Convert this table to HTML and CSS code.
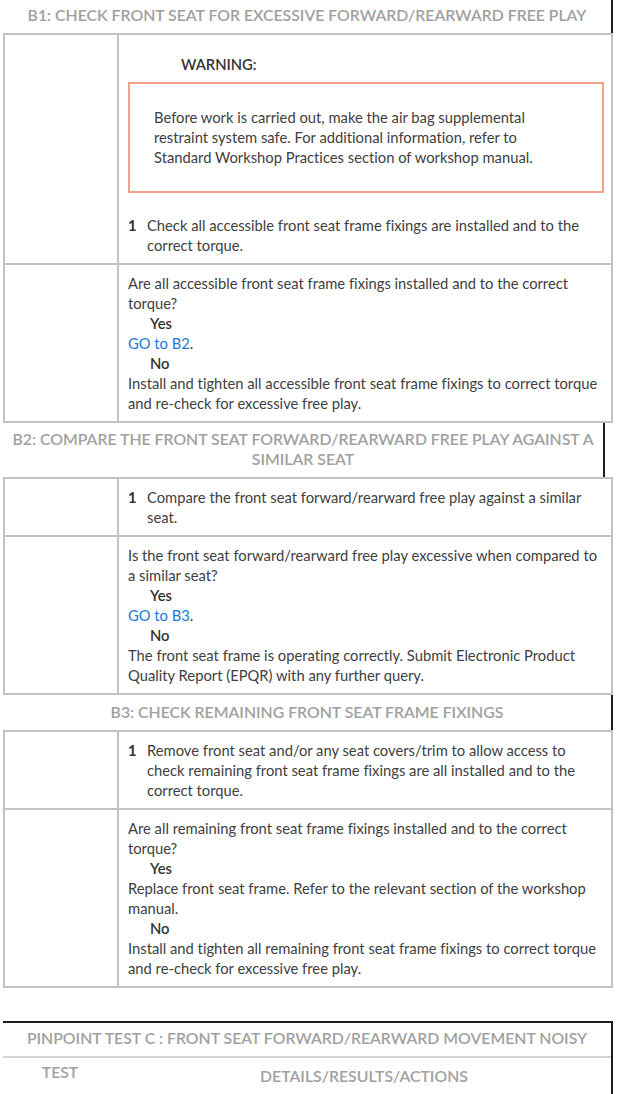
FILE: index.html
```html
<!DOCTYPE html>
<html>
<head>
<meta charset="utf-8">
<link rel="stylesheet" href="styles.css">
</head>
<body>
<div class="page">
  <div class="sec-head">B1: CHECK FRONT SEAT FOR EXCESSIVE FORWARD/REARWARD FREE PLAY</div>
  <div class="tbl">
    <div class="row">
      <div class="c1"></div>
      <div class="c2">
        <div class="warn-title">WARNING:</div>
        <div class="warn-box">Before work is carried out, make the air bag supplemental restraint system safe. For additional information, refer to Standard Workshop Practices section of workshop manual.</div>
        <div class="step"><span class="num">1</span><span class="step-text">Check all accessible front seat frame fixings are installed and to the correct torque.</span></div>
      </div>
    </div>
    <div class="row">
      <div class="c1"></div>
      <div class="c2">
        <div>Are all accessible front seat frame fixings installed and to the correct torque?</div>
        <div class="ans">Yes</div>
        <div><a class="link">GO to B2</a>.</div>
        <div class="ans">No</div>
        <div>Install and tighten all accessible front seat frame fixings to correct torque and re-check for excessive free play.</div>
      </div>
    </div>
  </div>

  <div class="sec-head sec-head-b2">B2: COMPARE THE FRONT SEAT FORWARD/REARWARD FREE PLAY AGAINST A SIMILAR SEAT</div>
  <div class="tbl">
    <div class="row">
      <div class="c1"></div>
      <div class="c2">
        <div class="step"><span class="num">1</span><span class="step-text">Compare the front seat forward/rearward free play against a similar seat.</span></div>
      </div>
    </div>
    <div class="row">
      <div class="c1"></div>
      <div class="c2">
        <div>Is the front seat forward/rearward free play excessive when compared to a similar seat?</div>
        <div class="ans">Yes</div>
        <div><a class="link">GO to B3</a>.</div>
        <div class="ans">No</div>
        <div>The front seat frame is operating correctly. Submit Electronic Product Quality Report (EPQR) with any further query.</div>
      </div>
    </div>
  </div>

  <div class="sec-head sec-head-b3">B3: CHECK REMAINING FRONT SEAT FRAME FIXINGS</div>
  <div class="tbl">
    <div class="row">
      <div class="c1"></div>
      <div class="c2">
        <div class="step"><span class="num">1</span><span class="step-text">Remove front seat and/or any seat covers/trim to allow access to check remaining front seat frame fixings are all installed and to the correct torque.</span></div>
      </div>
    </div>
    <div class="row">
      <div class="c1"></div>
      <div class="c2">
        <div>Are all remaining front seat frame fixings installed and to the correct torque?</div>
        <div class="ans">Yes</div>
        <div>Replace front seat frame. Refer to the relevant section of the workshop manual.</div>
        <div class="ans">No</div>
        <div>Install and tighten all remaining front seat frame fixings to correct torque and re-check for excessive free play.</div>
      </div>
    </div>
  </div>

  <div class="pp">
    <div class="pp-title">PINPOINT TEST C : FRONT SEAT FORWARD/REARWARD MOVEMENT NOISY</div>
    <div class="pp-cols">
      <div class="pp-c1">TEST</div>
      <div class="pp-c2">DETAILS/RESULTS/ACTIONS</div>
    </div>
  </div>
</div>
</body>
</html>
```
FILE: styles.css
```css
html, body {
  margin: 0;
  padding: 0;
  background: #fff;
}
body {
  font-family: Lato, "Open Sans", "Liberation Sans", sans-serif;
  font-size: 14.75px;
  line-height: 20px;
  color: #404040;
  font-variant-ligatures: none;
}
.page {
  width: 610px;
  padding-left: 3px;
}
.sec-head {
  text-align: center;
  color: #a0a0a0;
  font-size: 15.8px;
  font-weight: 600;
  line-height: 20px;
  padding: 5px 4px 8px;
  border-right: 2px solid #1e1e1e;
}
.sec-head-b2 {
  margin-right: 8px;
  padding: 6px 0 8px;
}
.sec-head-b3 {
  padding-top: 7px;
}
.tbl {
  border: 2px solid #c2c2c2;
}
.row {
  display: flex;
}
.row + .row {
  border-top: 2px solid #c2c2c2;
}
.c1 {
  width: 112px;
  flex: none;
  border-right: 2px solid #c2c2c2;
}
.c2 {
  flex: 1;
  padding: 8px 7px 8px 9px;
}
.warn-title {
  margin: 11px 0 8px 53px;
  font-weight: 600;
  color: #333;
}
.warn-box {
  border: 2px solid #f5a08c;
  padding: 23px 50px 24px 24px;
}
.step {
  display: flex;
  margin-top: 22px;
}
.c2 > .step:first-child {
  margin-top: 0;
}
.num {
  width: 19px;
  flex: none;
  font-weight: 700;
  color: #333;
}
.step-text {
  flex: 1;
  padding-right: 10px;
}
.ans {
  padding-left: 22px;
  font-weight: 600;
  color: #333;
}
.link {
  color: #1a7ad8;
  text-decoration: none;
}
.pp {
  margin-top: 33px;
  border-top: 2px solid #1e1e1e;
  border-right: 2px solid #1e1e1e;
  width: 608px;
  color: #a0a0a0;
  font-weight: 600;
  font-size: 15.8px;
}
.pp-title {
  text-align: center;
  padding: 5px 0 8px;
  line-height: 20px;
  border-bottom: 2px solid #d4d4d4;
}
.pp-cols {
  display: flex;
  line-height: 20px;
  padding-bottom: 8px;
}
.pp-c1 {
  width: 114px;
  text-align: center;
  padding-top: 4px;
}
.pp-c2 {
  flex: 1;
  text-align: center;
  padding-top: 8px;
}
```
